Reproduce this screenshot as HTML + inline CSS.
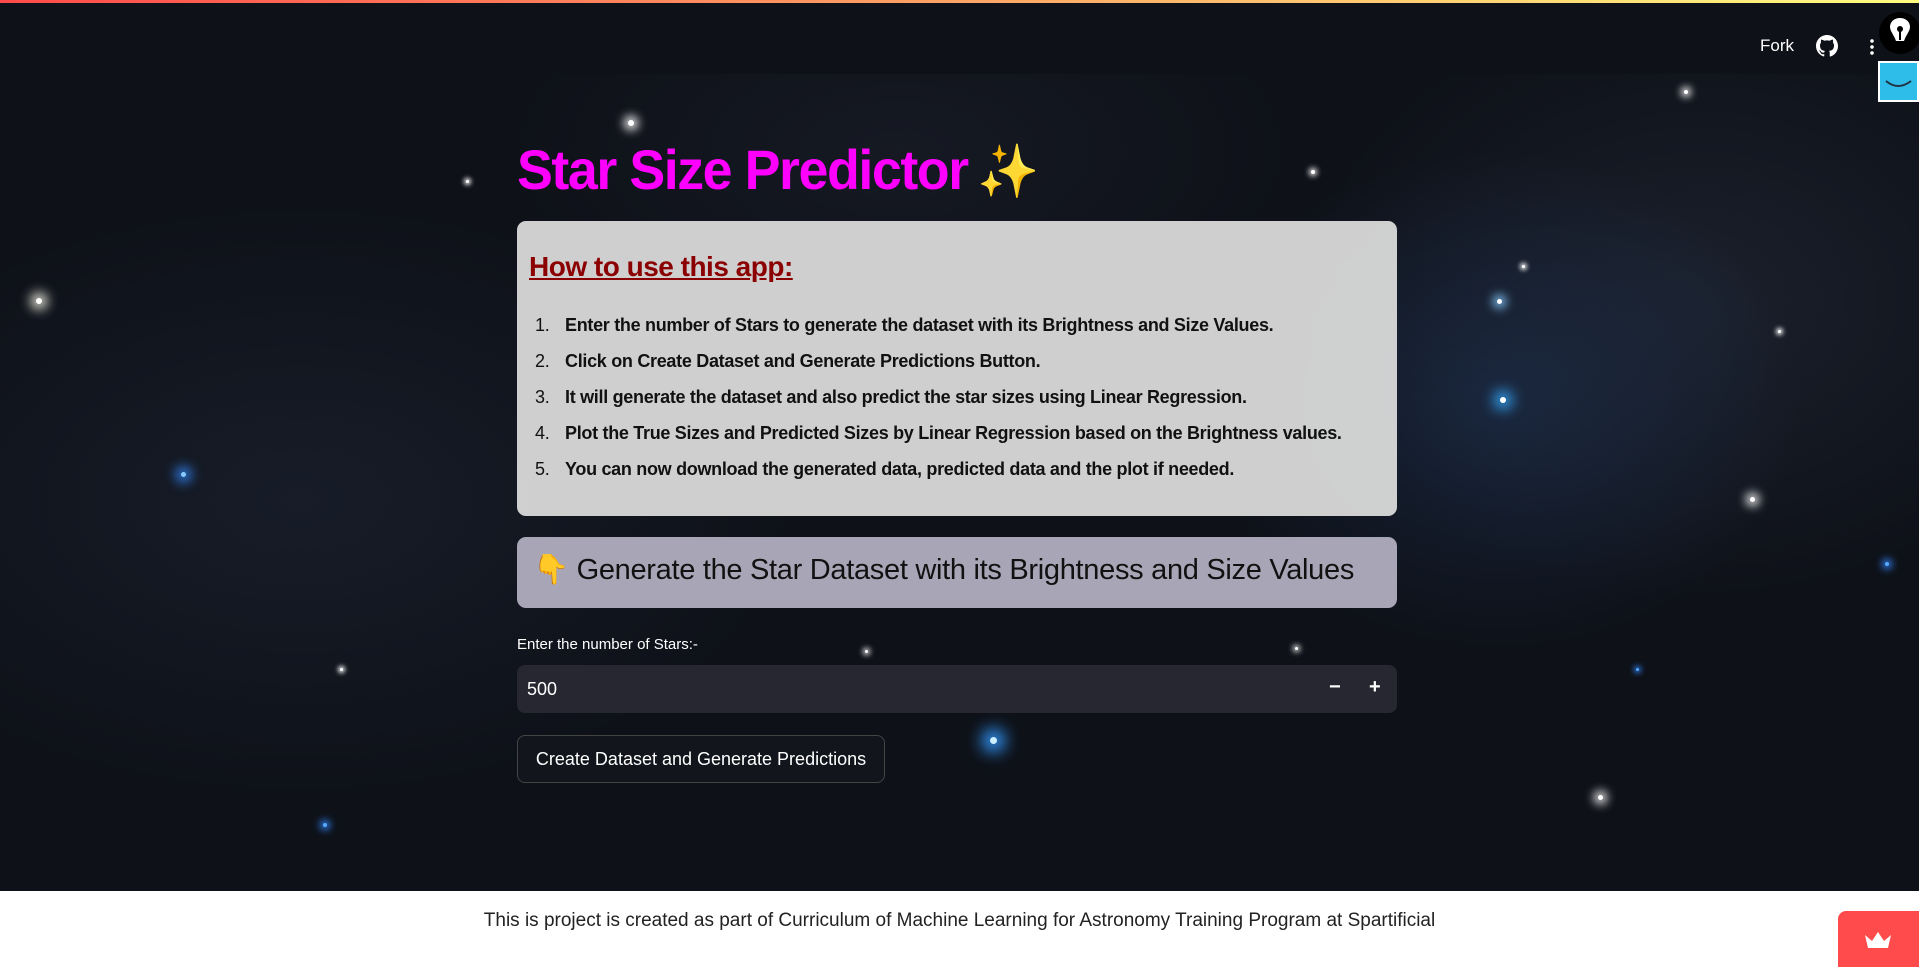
<!DOCTYPE html>
<html><head><meta charset="utf-8"><style>
*{margin:0;padding:0;box-sizing:border-box}
body{width:1919px;height:967px;overflow:hidden;font-family:"Liberation Sans",sans-serif;background:#fff;position:relative}
.bg{position:absolute;left:0;top:0;width:1919px;height:891px;background:
radial-gradient(ellipse 300px 250px at 1500px 400px,rgba(40,70,120,.35),transparent),
radial-gradient(ellipse 400px 300px at 1700px 300px,rgba(50,60,80,.35),transparent),
radial-gradient(ellipse 500px 300px at 300px 500px,rgba(40,50,70,.35),transparent),
radial-gradient(ellipse 400px 200px at 900px 150px,rgba(40,45,60,.3),transparent),
#0e1118;overflow:hidden}
.s{position:absolute;border-radius:50%;background:#fff}
.hdr{position:absolute;left:0;top:0;width:1919px;height:74px;background:#0e1117;border-top:3px solid;border-image:linear-gradient(90deg,#ff4b4b,#fffd80) 1}
.fork{position:absolute;left:1760px;top:33px;color:#fff;font-size:17px}
h1{position:absolute;left:517px;top:137px;font-size:56px;color:#f0f;font-weight:bold;font-family:"Liberation Sans",sans-serif;letter-spacing:-1.5px;transform:scaleX(.96);transform-origin:0 0;white-space:nowrap}
h1 span{margin-left:10px;font-size:52px}
.box1{position:absolute;left:517px;top:221px;width:880px;height:295px;background:rgba(215,215,215,.96);border-radius:9px}
.box1 h2{position:absolute;left:12px;top:30px;font-size:28px;color:#8b0000;text-decoration:underline;font-weight:bold;letter-spacing:-.5px}
.box1 ol{position:absolute;left:18px;top:94px;list-style:none;font-size:18px;color:#111;font-weight:bold}
.box1 li{height:36px;letter-spacing:-.3px}
.box1 li span{display:inline-block;width:30px;font-weight:normal}
.box2{position:absolute;left:517px;top:537px;width:880px;height:71px;background:rgba(175,173,188,.96);border-radius:9px;font-size:29px;color:#111;padding:16px 0 0 16px;letter-spacing:-.3px}
.lbl{position:absolute;left:517px;top:636px;font-size:15px;color:#fff}
.inp{position:absolute;left:517px;top:665px;width:880px;height:48px;background:#262730;border-radius:8px;color:#fff;font-size:18px;padding:14px 10px}
.inp b{position:absolute;top:11px;font-size:20px}
.btn{position:absolute;left:517px;top:735px;width:368px;height:48px;background:#12151c;border:1px solid #444;border-radius:8px;color:#fff;font-size:18px;text-align:center;line-height:46px}
.foot{position:absolute;left:0;top:910px;width:1919px;text-align:center;font-size:19px;color:#222}
.crown{position:absolute;left:1838px;top:911px;width:81px;height:56px;background:#ff4b4b;border-radius:8px 0 0 0}
</style></head><body>
<div class="bg">
<div class="s" style="left:628px;top:120px;width:6px;height:6px;box-shadow:0 0 10px 4px #fff"></div>
<div class="s" style="left:36px;top:298px;width:6px;height:6px;box-shadow:0 0 12px 5px #ffe"></div>
<div class="s" style="left:181px;top:472px;width:5px;height:5px;background:#8cf;box-shadow:0 0 12px 5px #38f"></div>
<div class="s" style="left:990px;top:737px;width:7px;height:7px;background:#cef;box-shadow:0 0 16px 8px #39f"></div>
<div class="s" style="left:1500px;top:397px;width:6px;height:6px;box-shadow:0 0 14px 6px #3af"></div>
<div class="s" style="left:1497px;top:299px;width:5px;height:5px;box-shadow:0 0 10px 4px #8cf"></div>
<div class="s" style="left:1750px;top:497px;width:5px;height:5px;box-shadow:0 0 10px 4px #fff"></div>
<div class="s" style="left:1598px;top:795px;width:5px;height:5px;box-shadow:0 0 10px 4px #fff"></div>
<div class="s" style="left:1684px;top:90px;width:4px;height:4px;box-shadow:0 0 8px 3px #fff"></div>
<div class="s" style="left:1885px;top:562px;width:4px;height:4px;background:#5af;box-shadow:0 0 8px 3px #38f"></div>
<div class="s" style="left:323px;top:823px;width:4px;height:4px;background:#5af;box-shadow:0 0 8px 3px #38f"></div>
<div class="s" style="left:1311px;top:170px;width:4px;height:4px;box-shadow:0 0 6px 2px #fff"></div>
<div class="s" style="left:1295px;top:647px;width:3px;height:3px;box-shadow:0 0 6px 2px #fff"></div>
<div class="s" style="left:865px;top:650px;width:3px;height:3px;box-shadow:0 0 6px 2px #fff"></div>
<div class="s" style="left:466px;top:180px;width:3px;height:3px;box-shadow:0 0 5px 2px #fff"></div>
<div class="s" style="left:1522px;top:265px;width:3px;height:3px;box-shadow:0 0 5px 2px #fff"></div>
<div class="s" style="left:1778px;top:330px;width:3px;height:3px;box-shadow:0 0 5px 2px #fff"></div>
<div class="s" style="left:340px;top:668px;width:3px;height:3px;box-shadow:0 0 5px 2px #fff"></div>
<div class="s" style="left:1636px;top:668px;width:3px;height:3px;background:#5af;box-shadow:0 0 6px 2px #38f"></div>
</div>
<div class="hdr">
<div class="fork">Fork</div>
<svg style="position:absolute;left:1816px;top:32px" width="22" height="22" viewBox="0 0 16 16"><path fill="#fff" d="M8 0C3.58 0 0 3.58 0 8c0 3.54 2.29 6.53 5.47 7.590.4.07.55-.17.55-.38v-1.34C3.78 14.36 3.31 12.8 3.31 12.8c-.36-.92-.89-1.17-.89-1.17-.73-.5.05-.49.05-.49.8.06 1.23.83 1.23.83.71 1.23 1.87.87 2.33.66.07-.52.28-.87.51-1.07-1.78-.2-3.64-.89-3.64-3.95 0-.87.31-1.59.82-2.15-.08-.2-.36-1.02.08-2.12 0 0 .67-.21 2.2.82a7.6 7.6 0 014 0c1.53-1.04 2.2-.82 2.2-.82.44 1.1.16 1.92.08 2.12.51.56.82 1.27.82 2.15 0 3.07-1.87 3.75-3.65 3.95.29.25.54.73.54 1.48v2.2c0 .21.15.46.55.38A8 8 0 0016 8c0-4.42-3.58-8-8-8z"/></svg>
<div style="position:absolute;left:1870px;top:35px;width:4px;height:18px;background:radial-gradient(circle,#fff 1.6px,transparent 2px) 0 0/4px 6px"></div>
<div style="position:absolute;left:1879px;top:9px;width:42px;height:42px;border-radius:50%;background:#000"><svg width="42" height="42" viewBox="0 0 42 42"><path fill="#fff" d="M21 6c-6 0-10 4-10 9 0 4 4 8 6 14h8c2-6 6-10 6-14 0-5-4-9-10-9z"/><circle cx="21" cy="17" r="3" fill="#000"/><rect x="20" y="18" width="2" height="10" fill="#000"/></svg></div>
</div>
<div style="position:absolute;left:1878px;top:61px;width:41px;height:41px;background:#2ebde8;border:2px solid #fff"><svg width="37" height="37"><path d="M6 18q12 10 25 0" stroke="#234" stroke-width="2" fill="none"/></svg></div>
<h1>Star Size Predictor<span style="color:#f7c13b">✨</span></h1>
<div class="box1"><h2>How to use this app:</h2>
<ol>
<li><span>1.</span>Enter the number of Stars to generate the dataset with its Brightness and Size Values.</li>
<li><span>2.</span>Click on Create Dataset and Generate Predictions Button.</li>
<li><span>3.</span>It will generate the dataset and also predict the star sizes using Linear Regression.</li>
<li><span>4.</span>Plot the True Sizes and Predicted Sizes by Linear Regression based on the Brightness values.</li>
<li><span>5.</span>You can now download the generated data, predicted data and the plot if needed.</li>
</ol></div>
<div class="box2"><span style="color:#f5b323">👇</span> Generate the Star Dataset with its Brightness and Size Values</div>
<div class="lbl">Enter the number of Stars:-</div>
<div class="inp">500<b style="left:812px">−</b><b style="left:852px">+</b></div>
<div class="btn">Create Dataset and Generate Predictions</div>
<div class="foot">This is project is created as part of Curriculum of Machine Learning for Astronomy Training Program at Spartificial</div>
<div class="crown"><svg width="81" height="56"><path d="M27 24l7 6 6-9 6 9 7-6-3 13H30z" fill="#fff"/></svg></div>
</body></html>
